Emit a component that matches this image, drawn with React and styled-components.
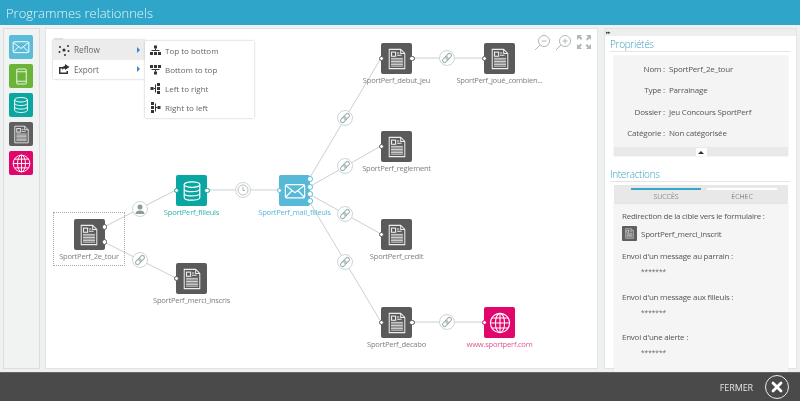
import React from "react";
import styled, { createGlobalStyle } from "styled-components";

const Global = createGlobalStyle`
  html, body { margin: 0; padding: 0; background: #eef0f1; }
  body { font-family: "Open Sans", "Liberation Sans", sans-serif; overflow: hidden; }
  * { box-sizing: border-box; }
`;

const Page = styled.div`
  width: 800px; height: 401px; display: flex; flex-direction: column; overflow: hidden; filter: blur(0.45px);
`;
const Header = styled.header`
  height: 25px; background: #2fa6c9; color: #e6f5fa; display: flex; align-items: center; padding: 0 6px;
  font-size: 13px; font-weight: 300; flex: none;
`;
const Main = styled.main`
  height: 347px; flex: none; display: flex; padding: 3px 3px 3px 3px; background: #eef0f1;
`;
const Palette = styled.aside`
  width: 37px; flex: none; background: #f1f2f2; border: 1px solid #dcdede; display: flex; flex-direction: column;
  gap: 5px; padding: 6px 0 0 5px; margin-right: 5px;
`;
const Tile = styled.div`
  width: 24px; height: 24px; border-radius: 2px; background: ${p => p.$c}; display: flex; align-items: center; justify-content: center;
`;
const Canvas = styled.section`
  position: relative; width: 553px; flex: none; background: #fff; border: 1px solid #e2e4e4; margin-right: 6px;
`;
const Edges = styled.svg`
  position: absolute; left: -1px; top: -1px; width: 553px; height: 341px;
`;
const Node = styled.div`
  position: absolute; left: ${p => p.$x - 46}px; top: ${p => p.$y - 29}px; width: 31px; height: 31px; border-radius: 2px;
  background: ${p => p.$c}; display: flex; align-items: center; justify-content: center;
`;
const NodeLabel = styled.span`
  position: absolute; left: 50%; top: 31px; transform: translateX(-50%); white-space: nowrap; font-size: 7.6px; line-height: 12px;
  letter-spacing: -0.25px; font-weight: 400; color: ${p => p.$c || "#808080"};
`;
const Port = styled.i`
  position: absolute; width: 5.5px; height: 5.5px; border-radius: 50%; background: #fff; border: 1px solid ${p => p.$c};
  left: ${p => (p.$right ? 28 : -2.5)}px; top: ${p => p.$t - 2.75}px;
`;
const Selection = styled.div`
  position: absolute; left: 7px; top: 183px; width: 72px; height: 54px; border: 1px dotted #aaa;
`;
const Menu = styled.nav`
  position: absolute; left: 7px; top: 11px; width: 92px; background: #fff; box-shadow: 0 0 2px #bbb; z-index: 2;
  &::before { content: ""; position: absolute; left: 1px; top: -2px; width: 9px; height: 2px; background: #ddd; }
`;
const MenuRow = styled.div`
  height: 19.5px; display: flex; align-items: center; gap: 4px; padding: 0 5px; font-size: 8.2px; color: #666;
  background: ${p => (p.$active ? "#ececec" : "#fff")};
  span { flex: 1; }
`;
const Caret = styled.i`
  width: 0; height: 0; border-left: 3.5px solid #3f86c6; border-top: 3px solid transparent; border-bottom: 3px solid transparent; margin-right: 0;
`;
const Submenu = styled.div`
  position: absolute; left: 92px; top: 1px; width: 109px; height: 77px; background: #fff; box-shadow: 0 0 2px #bbb; padding-top: 0.5px;
`;
const SubRow = styled.div`
  height: 18.8px; display: flex; align-items: center; gap: 4px; padding: 0 4px 0 5px; font-size: 8px; color: #666;
`;
const Zoom = styled.div`
  position: absolute; right: 5px; top: 5px; display: flex; gap: 4px; color: #b2b8b8;
`;
const Side = styled.aside`
  width: 193px; flex: none; background: #fff; border: 1px solid #e2e4e4; display: flex; flex-direction: column;
`;
const SideBar = styled.div`
  height: 7px; background: #eeeeee; font-size: 5px; line-height: 7px; color: #444; padding-left: 1px; flex: none; letter-spacing: -1px;
`;
const SectionTitle = styled.h2`
  margin: ${p => p.$top || 0}px 6px 0 5px; font-size: 10px; letter-spacing: -0.3px; line-height: 15px; height: 16px; font-weight: 300;
  color: #3d9fbf; border-bottom: 1px solid #e4e6e6; padding-top: 1px; flex: none;
`;
const Props = styled.div`
  margin: 4px 8px 0 9px; height: 100px; background: #f4f4f4; position: relative; flex: none; padding-top: 2px; box-shadow: 0 0 1px #ccc;
`;
const PropRow = styled.div`
  height: 21.3px; display: flex; align-items: center; font-size: 8px; letter-spacing: -0.2px; color: #555;
  b { font-weight: 400; width: 51px; text-align: right; margin-right: 4px; }
`;
const Collapse = styled.div`
  position: absolute; left: 0; right: 0; bottom: 0; height: 9px; background: #e9e9e9; display: flex; justify-content: center;
  i { width: 11px; height: 8px; margin-top: 1px; background: #fff; display: flex; align-items: center; justify-content: center; }
  i::after { content: ""; border-bottom: 3px solid #333; border-left: 3px solid transparent; border-right: 3px solid transparent; }
`;
const Tabs = styled.div`
  margin: 3px 8px 0 9px; height: 19px; background: #e8e8e8; display: flex; gap: 6px; padding: 3px 11px 0 17px; flex: none;
`;
const Tab = styled.div`
  width: 70px; text-align: center; font-size: 7px; line-height: 10px; color: #555; font-weight: 300;
  &::before { content: ""; display: block; height: 2px; margin-bottom: 2px; background: ${p => (p.$on ? "#37a6c8" : "#fff")}; }
`;
const Interactions = styled.div`
  margin: 0 8px 0 9px; height: 175px; background: #f5f5f5; padding: 6px 8px; flex: none; font-size: 8px; letter-spacing: -0.25px; color: #555; box-shadow: 0 0 1px #ccc;
`;
const Line = styled.div`
  height: 12px; line-height: 12px; white-space: nowrap;
`;
const Target = styled.div`
  height: 15px; margin: 3.5px 0 9.5px; display: flex; align-items: center; gap: 4px;
  i { width: 15px; height: 15px; background: #5f5f5f; border-radius: 1px; display: flex; align-items: center; justify-content: center; }
`;
const Stars = styled.div`
  height: 28.7px; padding: 5px 0 0 19px; font-size: 6.5px; line-height: 10px; letter-spacing: 0; color: #666;
`;
const Footer = styled.footer`
  flex: none; position: relative; z-index: 3; height: 29px; background: #4a4a4a; border-top: 1px solid #666; display: flex; align-items: center;
  justify-content: flex-end; gap: 12px; padding-right: 11px; color: #e2e2e2; font-size: 9px; letter-spacing: -0.1px;
`;
const Close = styled.div`
  width: 24px; height: 24px; border: 1.5px solid #eee; border-radius: 50%; display: flex; align-items: center; justify-content: center;
`;

const Mail = ({ s = 22, c = "#fff" }) => (
  <svg width={s} height={s} viewBox="0 0 24 24" fill="none" stroke={c} strokeWidth="1.3">
    <rect x="1.5" y="5" width="21" height="14.5" rx="1.5" />
    <path d="M2 6l10 8 10-8M2 18.5l7-7M22 18.5l-7-7" />
  </svg>
);
const Phone = ({ s = 22 }) => (
  <svg width={s} height={s} viewBox="0 0 24 24" fill="none" stroke="#e6f3dc" strokeWidth="1.3">
    <rect x="6" y="2.5" width="12" height="19" rx="1.5" />
    <path d="M6 6h12M6 18h12" />
  </svg>
);
const Db = ({ s = 22 }) => (
  <svg width={s} height={s} viewBox="0 0 24 24" fill="none" stroke="#fff" strokeWidth="1.3">
    <ellipse cx="12" cy="5" rx="8.5" ry="3" />
    <path d="M3.5 5v14c0 1.7 3.8 3 8.5 3s8.5-1.3 8.5-3V5M3.5 9.7c0 1.7 3.8 3 8.5 3s8.5-1.3 8.5-3M3.5 14.4c0 1.700 3.800 3 8.500 3s8.500-1.300 8.500-3" />
  </svg>
);
const Doc = ({ s = 22 }) => (
  <svg width={s} height={s} viewBox="0 0 24 24" fill="none" stroke="#eee" strokeWidth="1.1">
    <path d="M3.5 1.500h12.500l4.500 4.500v16.500h-17z" />
    <path d="M16 1.500v4.500h4.500" />
    <rect x="6" y="4.500" width="4.500" height="4.500" strokeWidth="1.200" />
    <path d="M12 5.500h2.500M12 8h5" />
    <path d="M5.500 11.300h13M5.500 13h13M5.500 14.700h13M5.500 16.400h13M5.500 18.100h13M5.500 19.800h13" strokeWidth=".9" />
  </svg>
);
const Web = ({ s = 22 }) => (
  <svg width={s} height={s} viewBox="0 0 24 24" fill="none" stroke="#fff" strokeWidth="1.2">
    <circle cx="12" cy="12" r="10.5" />
    <ellipse cx="12" cy="12" rx="5" ry="10.5" />
    <path d="M12 1.500v21M1.500 12h21M3 6.500h18M3 17.500h18" />
  </svg>
);

const edges = [
  "M104 227L176 190", "M104 242L176 278", "M207 190H279",
  "M309 179L381 58", "M309 187L381 146", "M309 194L381 234", "M309 201L381 322",
  "M412 58H484", "M412 322H484",
];
const Link = ({ x, y }) => (
  <g>
    <circle cx={x} cy={y} r="7.5" fill="#fff" stroke="#cfd6d6" />
    <g transform={`rotate(-45 ${x} ${y})`} fill="none" stroke="#9fb0b0" strokeWidth="1.1">
      <rect x={x - 5.5} y={y - 2} width="6.5" height="4" rx="2" />
      <rect x={x - 1} y={y - 2} width="6.5" height="4" rx="2" />
    </g>
  </g>
);

const nodes = [
  { x: 73.5, y: 219, c: "#5a5a5a", I: Doc, label: "SportPerf_2e_tour", r: [8, 23] },
  { x: 176, y: 175, c: "#0aa6a2", I: Db, label: "SportPerf_filleuls", lc: "#35b3b0", l: 15.5, r: [15.5] },
  { x: 279, y: 175, c: "#56b9d8", I: Mail, label: "SportPerf_mail_filleuls", lc: "#56b9d8", l: 15.5, r: [4, 12, 19, 26] },
  { x: 176, y: 263, c: "#5a5a5a", I: Doc, label: "SportPerf_merci_inscris", l: 15.5 },
  { x: 381, y: 43, c: "#5a5a5a", I: Doc, label: "SportPerf_debut_jeu", l: 15.5, r: [15.5] },
  { x: 484, y: 43, c: "#5a5a5a", I: Doc, label: "SportPerf_joué_combien...", l: 15.5 },
  { x: 381, y: 131, c: "#5a5a5a", I: Doc, label: "SportPerf_reglement", l: 15.5 },
  { x: 381, y: 219, c: "#5a5a5a", I: Doc, label: "SportPerf_credit", l: 15.5 },
  { x: 381, y: 307, c: "#5a5a5a", I: Doc, label: "SportPerf_decabo", l: 15.5, r: [15.5] },
  { x: 484, y: 307, c: "#e0066c", I: Web, label: "www.sportperf.com", lc: "#e4558f", l: 15.5 },
];

const Tree = ({ rot = 0 }) => (
  <svg width="11" height="11" viewBox="0 0 11 11" fill="#333">
    <g transform={`rotate(${rot} 5.5 5.5)`}>
      <rect x="4" y="0.5" width="3" height="3" />
      <rect x="5" y="3.5" width="1" height="2" />
      <rect x="1.5" y="5" width="8" height="1" />
      <rect x="0" y="7" width="3" height="3" />
      <rect x="4" y="7" width="3" height="3" />
      <rect x="8" y="7" width="3" height="3" />
    </g>
  </svg>
);

export default function App() {
  return (
    <>
      <Global />
      <Page>
        <Header>Programmes relationnels</Header>
        <Main>
          <Palette>
            <Tile $c="#5bbcd8"><Mail s={18} /></Tile>
            <Tile $c="#6cb33a"><Phone s={19} /></Tile>
            <Tile $c="#0aa6a2"><Db s={18} /></Tile>
            <Tile $c="#5f5f5f"><Doc s={19} /></Tile>
            <Tile $c="#e0066c"><Web s={19} /></Tile>
          </Palette>
          <Canvas>
            <Edges viewBox="45 28 553 341">
              <g stroke="#c9d0d0" strokeWidth="1" fill="none">
                {edges.map(d => <path key={d} d={d} />)}
              </g>
              <circle cx="140" cy="209" r="7.5" fill="#fff" stroke="#cfd6d6" />
              <path d="M137.500 207a2.500 2.500 0 1 1 5 0a2.500 2.500 0 1 1-5 0M135.500 214c0-2.500 2-3.500 4.500-3.500s4.500 1 4.500 3.500z" fill="#8d9a9a" />
              <circle cx="243" cy="190" r="7.5" fill="#fff" stroke="#cfd6d6" />
              <circle cx="243" cy="190" r="5" fill="none" stroke="#b8c2c2" />
              <path d="M243 187v3.500h2" fill="none" stroke="#a5b0b0" />
              <Link x={140} y={260} />
              <Link x={345} y={118} />
              <Link x={345} y={166} />
              <Link x={345} y={214} />
              <Link x={345} y={262} />
              <Link x={447} y={58} />
              <Link x={447} y={322} />
            </Edges>
            <Selection />
            {nodes.map(n => (
              <Node key={n.label} $x={n.x} $y={n.y} $c={n.c}>
                <n.I />
                <NodeLabel $c={n.lc}>{n.label}</NodeLabel>
                {n.l && <Port $t={n.l} $c={n.c} />}
                {(n.r || []).map(t => <Port key={t} $right $t={t} $c={n.c} />)}
              </Node>
            ))}
            <Menu>
              <MenuRow $active>
                <svg width="12" height="12" viewBox="0 0 12 12" fill="#333">
                  <circle cx="6" cy="6" r="1.6" /><circle cx="2" cy="3" r="1" /><circle cx="10" cy="2" r="1" />
                  <circle cx="1.5" cy="8" r="1" /><circle cx="10.5" cy="7" r="1" /><circle cx="7" cy="11" r="1" />
                </svg>
                <span>Reflow</span><Caret />
              </MenuRow>
              <MenuRow>
                <svg width="12" height="12" viewBox="0 0 12 12" fill="#333">
                  <path d="M1 4h6v1.500H2.500v4h6V8H10v3H1z" /><path d="M7 1l4.500 3L7 7V5.200C5.500 5.200 4.500 6 4 7.500 4 4.500 5 3 7 2.800z" />
                </svg>
                <span>Export</span><Caret />
              </MenuRow>
              <Submenu>
                <SubRow><Tree /><span>Top to bottom</span></SubRow>
                <SubRow><Tree rot={180} /><span>Bottom to top</span></SubRow>
                <SubRow><Tree rot={-90} /><span>Left to right</span></SubRow>
                <SubRow><Tree rot={90} /><span>Right to left</span></SubRow>
              </Submenu>
            </Menu>
            <Zoom>
              <svg width="17" height="17" viewBox="0 0 17 17" fill="none" stroke="currentColor"><circle cx="10" cy="7" r="5.5" /><path d="M7.500 7h5M6 11l-5 5" /></svg>
              <svg width="17" height="17" viewBox="0 0 17 17" fill="none" stroke="currentColor"><circle cx="10" cy="7" r="5.5" /><path d="M7.500 7h5M10 4.500v5M6 11l-5 5" /></svg>
              <svg width="16" height="16" viewBox="0 0 16 16" fill="currentColor"><path d="M1 1h5L4.500 2.500 6.500 4.500 5 6 3 4 1 6zM15 1v5L13.500 4.500 11.500 6.500 10 5 12 3 10 1zM1 15v-5l1.500 1.500 2-2L6 11 4 13l2 2zM15 15h-5l1.500-1.500-2-2L11 10l2 2 2-2z" /></svg>
            </Zoom>
          </Canvas>
          <Side>
            <SideBar>▸▸</SideBar>
            <SectionTitle>Propriétés</SectionTitle>
            <Props>
              <PropRow><b>Nom :</b>SportPerf_2e_tour</PropRow>
              <PropRow><b>Type :</b>Parrainage</PropRow>
              <PropRow><b>Dossier :</b>Jeu Concours SportPerf</PropRow>
              <PropRow><b>Catégorie :</b>Non catégorisée</PropRow>
              <Collapse><i /></Collapse>
            </Props>
            <SectionTitle $top={10}>Interactions</SectionTitle>
            <Tabs>
              <Tab $on>SUCCÈS</Tab>
              <Tab>ÉCHEC</Tab>
            </Tabs>
            <Interactions>
              <Line>Redirection de la cible vers le formulaire :</Line>
              <Target><i><Doc s={11} /></i>SportPerf_merci_inscrit</Target>
              <Line>Envoi d'un message au parrain :</Line>
              <Stars>*******</Stars>
              <Line>Envoi d'un message aux filleuls :</Line>
              <Stars>*******</Stars>
              <Line>Envoi d'une alerte :</Line>
              <Stars>*******</Stars>
            </Interactions>
          </Side>
        </Main>
        <Footer>
          FERMER
          <Close>
            <svg width="12" height="12" viewBox="0 0 12 12" stroke="#fff" strokeWidth="2.8" strokeLinecap="round"><path d="M2 2l8 8M10 2l-8 8" /></svg>
          </Close>
        </Footer>
      </Page>
    </>
  );
}
